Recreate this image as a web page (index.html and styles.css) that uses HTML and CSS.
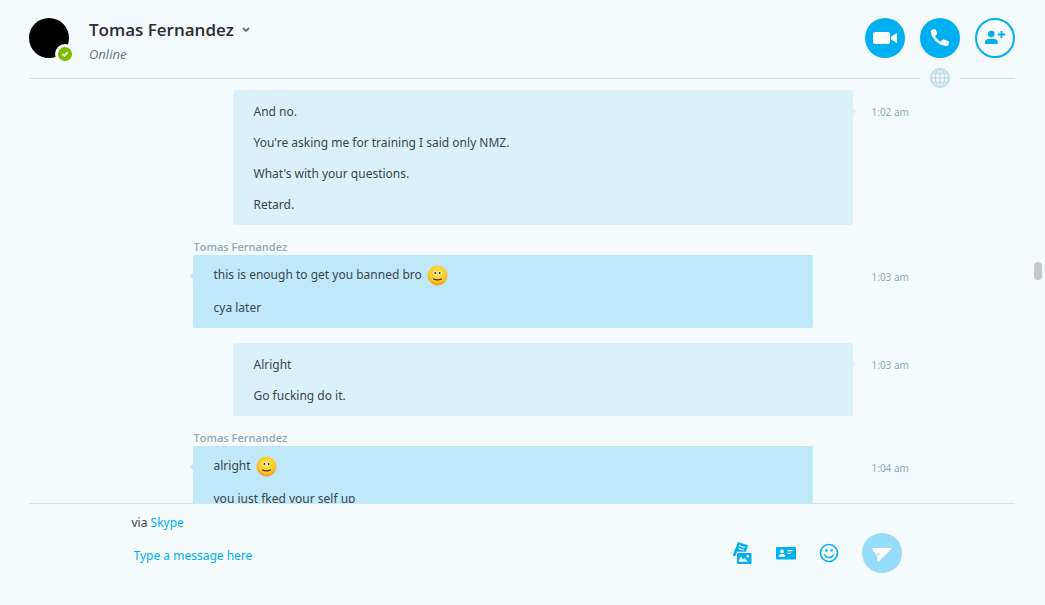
FILE: index.html
```html
<!DOCTYPE html>
<html lang="en">
<head>
    <meta charset="UTF-8">
    <meta name="viewport" content="width=device-width, initial-scale=1.0">
    <title>Tomas Fernandez</title>
    <link rel="stylesheet" href="styles.css">
</head>
<body>
    <svg class="defs" aria-hidden="true">
        <defs>
            <radialGradient id="face" cx="50%" cy="38%" r="65%">
                <stop offset="0" stop-color="#ffe64c"/>
                <stop offset="0.65" stop-color="#fdc926"/>
                <stop offset="1" stop-color="#ef8a22"/>
            </radialGradient>
            <symbol id="smile" viewBox="0 0 21 21">
                <circle cx="10.5" cy="10.5" r="10" fill="url(#face)"/>
                <ellipse cx="8.1" cy="8" rx="1.9" ry="1.7" fill="#fff"/>
                <ellipse cx="12.9" cy="8" rx="1.9" ry="1.7" fill="#fff"/>
                <circle cx="8.3" cy="8.1" r="1" fill="#222"/>
                <circle cx="12.7" cy="8.1" r="1" fill="#222"/>
                <path d="M6.6 14q3.900 1.900 7.800 0" fill="none" stroke="#3a2408" stroke-width="1.3" stroke-linecap="round"/>
            </symbol>
        </defs>
    </svg>

    <div class="chat">
        <header class="chat-header">
            <div class="avatar">
                <span class="status">
                    <svg width="14" height="14" viewBox="0 0 14 14"><path d="M4.4 7.2l1.8 1.7 3.4-3.5" fill="none" stroke="#fff" stroke-width="1.7"/></svg>
                </span>
            </div>
            <div class="contact">
                <h1>
                    <button type="button" class="contact-name">Tomas Fernandez
                        <svg width="8" height="6" viewBox="0 0 8 6"><path d="M1 1l3 3 3-3" fill="none" stroke="#5f7480" stroke-width="1.8"/></svg>
                    </button>
                </h1>
                <p class="presence">Online</p>
            </div>
            <div class="actions">
                <button type="button" class="round" aria-label="Video call">
                    <svg width="40" height="40" viewBox="0 0 40 40" fill="#fff"><rect x="8" y="14" width="17" height="12" rx="2.5"/><path d="M26 18.5l6-3.500v10l-6-3.500z"/></svg>
                </button>
                <button type="button" class="round" aria-label="Call">
                    <svg width="40" height="40" viewBox="0 0 40 40" fill="#fff"><path d="M11.2 12.2l2.6-1.2q1.2-.3 1.8.8l1.5 3q.3.9-.4 1.6l-1.2 1.3q-.2.5.1 1 1.5 3.1 4.6 4.7.5.3 1-.1l1.5-1.5q.5-.5 1.2-.2l4.2 1.5q.9.4.8 1.3l-.3 2.2q-.3 1.3-1.6 1.3-7.1-.3-11.6-5.1-4.5-4.9-4.5-9.5.1-.8.3-1.1z"/></svg>
                </button>
                <button type="button" class="round outline" aria-label="Add people">
                    <svg width="36" height="36" viewBox="0 0 36 36" fill="#00aff0"><circle cx="14.3" cy="14" r="3.3"/><path d="M8 24v-2q.3-3 3.3-3h6q3.2 0 3.500 3v2z"/><path d="M23.6 11h1.8v2.6h2.8v1.8h-2.8v2.6h-1.8v-2.6h-2.8v-1.8h2.8z"/></svg>
                </button>
            </div>
        </header>
        <div class="divider">
            <svg width="20" height="20" viewBox="0 0 20 20" fill="none" stroke="#c0dce6" stroke-width="1.5">
                <circle cx="10" cy="10" r="9.1" stroke-width="1.8"/>
                <ellipse cx="10" cy="10" rx="4.7" ry="9"/>
                <path d="M10 1v18M1 10h18M2.5 5.5h15M2.5 14.5h15"/>
            </svg>
        </div>

        <main class="messages">
            <div class="message-list">
                <div class="message mine">
                    <div class="bubble">
                        <p>And no.</p>
                        <p>You're asking me for training I said only NMZ.</p>
                        <p>What's with your questions.</p>
                        <p>Retard.</p>
                    </div>
                    <time>1:02 am</time>
                </div>
                <div class="message theirs">
                    <div class="author">Tomas Fernandez</div>
                    <div class="bubble">
                        <p class="with-emoji">this is enough to get you banned bro <svg class="emoji" role="img" aria-label="smile"><use href="#smile"/></svg></p>
                        <p>cya later</p>
                    </div>
                    <time>1:03 am</time>
                </div>
                <div class="message mine">
                    <div class="bubble">
                        <p>Alright</p>
                        <p>Go fucking do it.</p>
                    </div>
                    <time>1:03 am</time>
                </div>
                <div class="message theirs">
                    <div class="author">Tomas Fernandez</div>
                    <div class="bubble">
                        <p class="with-emoji">alright <svg class="emoji" role="img" aria-label="smile"><use href="#smile"/></svg></p>
                        <p>you just fked your self up</p>
                    </div>
                    <time>1:04 am</time>
                </div>
            </div>
        </main>

        <footer class="chat-footer">
            <form class="composer">
                <div class="compose-text">
                    <p class="via">via <a href="#">Skype</a></p>
                    <input type="text" placeholder="Type a message here" aria-label="Type a message here">
                </div>
                <div class="tools">
                    <button type="button" aria-label="Send files">
                        <svg width="20" height="22" viewBox="0 0 20 22">
                            <path d="M5 0l10 3.300-2.400 7.700H3l-1.200 3L0 13.400z" fill="#00aff0"/>
                            <path d="M6.200 3.200q1.700 2.300 5.800 2M5.400 6q1.700 2.200 5.500 2" fill="none" stroke="#f5fbfd" stroke-width="1.2"/>
                            <rect x="2.700" y="9.700" width="17" height="13" rx="1" fill="#f5fbfd"/>
                            <rect x="4" y="11" width="14.500" height="11" rx="1" fill="#00aff0"/>
                            <path d="M0 13.400L2.500 6l1.300 3.700-1.400 4.300z" fill="#00aff0"/>
                            <path d="M6 19.800v-1.800l2-3.500 2 3 1.500-1.500 3.500 3.800z" fill="#f5fbfd"/>
                            <circle cx="14.800" cy="14.300" r="1.4" fill="#f5fbfd"/>
                        </svg>
                    </button>
                    <button type="button" aria-label="Send contacts">
                        <svg width="20" height="20" viewBox="0 0 20 20">
                            <rect x="0" y="4" width="20" height="12.5" rx="1" fill="#00aff0"/>
                            <circle cx="6" cy="8.5" r="1.9" fill="#f5fbfd"/>
                            <path d="M2.5 13.7q.3-2.7 2.5-2.7h2q2.3 0 2.5 2.7z" fill="#f5fbfd"/>
                            <path d="M11.5 7.7h5M11.5 10.3h3.5" stroke="#f5fbfd" stroke-width="1.2"/>
                        </svg>
                    </button>
                    <button type="button" aria-label="Emoticons">
                        <svg width="20" height="20" viewBox="0 0 20 20" fill="none" stroke="#00aff0">
                            <circle cx="10" cy="10" r="8.5" stroke-width="1.6"/>
                            <path d="M5.5 11.5q1.3 3 4.5 3t4.5-3" stroke-width="1.5"/>
                            <circle cx="7.3" cy="7.5" r="1.3" fill="#00aff0" stroke="none"/>
                            <circle cx="12.7" cy="7.5" r="1.3" fill="#00aff0" stroke="none"/>
                        </svg>
                    </button>
                    <button type="submit" class="send" aria-label="Send message">
                        <svg width="40" height="40" viewBox="0 0 40 40" fill="#fff"><path d="M11 15h18q1 .5 0 1.5L17 28q-1.3.8-1.7-.5l-.2-4.5 4.500-3.500-5.600 2.300-3.500-5.300q-.3-1.200.5-1.500z"/></svg>
                    </button>
                </div>
            </form>
        </footer>
        <div class="scroll-thumb"></div>
    </div>
</body>
</html>
```

FILE: styles.css
```css
* {
    box-sizing: border-box;
}

body {
    margin: 0;
    background-color: #f5fbfd;
    color: #3c454b;
    font-family: "Noto Sans", "Open Sans", sans-serif;
    font-size: 12px;
}

h1,
p {
    margin: 0;
}

svg {
    display: block;
}

button {
    padding: 0;
    border: none;
    background: none;
    color: inherit;
    font: inherit;
    cursor: pointer;
}

a {
    color: #00aff0;
    text-decoration: none;
}

.defs {
    position: absolute;
    width: 0;
    height: 0;
}

.chat {
    position: relative;
    display: flex;
    flex-direction: column;
    height: 100vh;
    padding: 0 30px 0 29px;
}

/* Header */
.chat-header {
    display: flex;
    padding: 18px 0 2px;
    font-family: "Open Sans", "Noto Sans", sans-serif;
}

.avatar {
    position: relative;
    width: 40px;
    height: 40px;
    margin-right: 20px;
    border-radius: 50%;
    background: #000;
}

.status {
    position: absolute;
    right: -6px;
    bottom: -6px;
    border: 3px solid #f5fbfd;
    border-radius: 50%;
    background: #7fba00;
}

.contact {
    flex: 1;
}

.contact h1 {
    color: #2b2b33;
    font-size: 17px;
    font-weight: 600;
    line-height: 24px;
}

.contact-name {
    display: flex;
    align-items: center;
    gap: 8px;
}

.presence {
    color: #5f7480;
    font-size: 13px;
    font-style: italic;
    line-height: 24px;
}

.actions {
    display: flex;
    gap: 15px;
}

.round {
    width: 40px;
    height: 40px;
    border-radius: 50%;
    background: #00aff0;
}

.round.outline {
    border: 2px solid #00aff0;
    background: none;
}

.divider {
    display: flex;
    align-items: center;
    gap: 10px;
}

.divider::before,
.divider::after {
    content: "";
    height: 1px;
    background: #cfe5ec;
}

.divider::before {
    flex: 1;
}

.divider::after {
    width: 55px;
}

/* Messages */
.messages {
    flex: 1;
    min-height: 0;
    overflow: hidden;
}

.message-list {
    display: flex;
    flex-direction: column;
    gap: 15px;
    max-width: 781px;
    margin: 0 auto;
    padding-top: 2px;
}

.message {
    display: grid;
    grid-template-columns: 61px 40px 1fr 40px 60px;
}

.author {
    grid-column: 2 / 5;
    padding: 0 0 2px 1px;
    color: #8faab5;
    font-family: "Open Sans", "Noto Sans", sans-serif;
    font-size: 11px;
    font-weight: 600;
    line-height: 13px;
}

.bubble {
    position: relative;
    padding: 6px 21px 5px;
    border-radius: 2px;
}

.bubble::before {
    content: "";
    position: absolute;
    top: 18px;
    width: 6px;
    height: 6px;
    transform: rotate(45deg);
}

.bubble p {
    line-height: 31px;
}

.bubble p.with-emoji {
    padding-bottom: 4px;
    line-height: 27px;
}

.theirs .bubble {
    grid-column: 2 / 4;
    background: #bfe9f9;
}

.theirs .bubble::before {
    left: -2px;
    background: #bfe9f9;
}

.mine .bubble {
    grid-column: 3 / 5;
    background: #dbf1fa;
}

.mine .bubble::before {
    right: -2px;
    background: #dbf1fa;
}

.emoji {
    display: inline-block;
    width: 21px;
    height: 21px;
    margin-left: 2px;
    vertical-align: -7px;
}

.message time {
    grid-column: 5;
    padding: 14px 0 0 19px;
    color: #8faab5;
    font-size: 10px;
    line-height: 16px;
    white-space: nowrap;
}

/* Composer */
.chat-footer {
    border-top: 1px solid #cfe5ec;
}

.composer {
    display: flex;
    max-width: 781px;
    margin: 0 auto;
    padding: 9px 11px 32px 0;
}

.compose-text {
    flex: 1;
}

.via {
    line-height: 20px;
}

.compose-text input {
    width: 100%;
    height: 28px;
    margin-top: 8px;
    padding: 0 2px;
    border: none;
    outline: none;
    background: none;
    color: #3c454b;
    font: inherit;
}

.compose-text input::placeholder {
    color: #00aff0;
    opacity: 1;
}

.tools {
    display: flex;
    align-items: center;
    gap: 23px;
    padding-top: 20px;
}

.send {
    border-radius: 50%;
    background: #94dcf8;
}

.scroll-thumb {
    position: absolute;
    top: 262px;
    right: 3px;
    width: 8px;
    height: 18px;
    border-radius: 4px;
    background: #c8c8ca;
}
```
